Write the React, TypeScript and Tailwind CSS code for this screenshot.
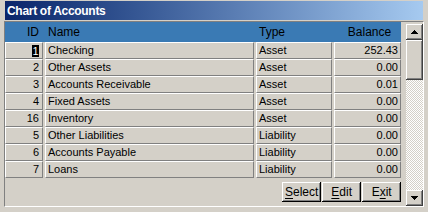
import React from 'react';

type Account = { id: string; name: string; type: string; balance: string };

const accounts: Account[] = [
  { id: '1', name: 'Checking', type: 'Asset', balance: '252.43' },
  { id: '2', name: 'Other Assets', type: 'Asset', balance: '0.00' },
  { id: '3', name: 'Accounts Receivable', type: 'Asset', balance: '0.01' },
  { id: '4', name: 'Fixed Assets', type: 'Asset', balance: '0.00' },
  { id: '16', name: 'Inventory', type: 'Asset', balance: '0.00' },
  { id: '5', name: 'Other Liabilities', type: 'Liability', balance: '0.00' },
  { id: '6', name: 'Accounts Payable', type: 'Liability', balance: '0.00' },
  { id: '7', name: 'Loans', type: 'Liability', balance: '0.00' },
];

const cell =
  'h-[17px] border-t border-l border-t-white border-l-white border-b border-r border-b-[#808080] border-r-[#808080] flex items-center';

const raised =
  'bg-[#d4d0c8] shadow-[inset_-1px_-1px_#404040,inset_1px_1px_#ffffff,inset_-2px_-2px_#808080]';

function Arrow({ down = false }: { down?: boolean }) {
  return (
    <svg width="7" height="4" viewBox="0 0 7 4" shapeRendering="crispEdges" className={down ? 'rotate-180' : ''}>
      <rect x="3" y="0" width="1" height="1" fill="#000" />
      <rect x="2" y="1" width="3" height="1" fill="#000" />
      <rect x="1" y="2" width="5" height="1" fill="#000" />
      <rect x="0" y="3" width="7" height="1" fill="#000" />
    </svg>
  );
}

function Button({ label, hot }: { label: string; hot: number }) {
  return (
    <button className="h-[20px] w-[39px] flex items-center justify-center text-[12px] text-black bg-[#d4d0c8] shadow-[inset_-1px_-1px_#000000,inset_1px_1px_#ffffff,inset_-2px_-2px_#808080]">
      {label.slice(0, hot)}
      <span className="underline underline-offset-2">{label[hot]}</span>
      {label.slice(hot + 1)}
    </button>
  );
}

export default function App() {
  return (
    <div
      className="w-[428px] h-[212px] bg-[#d4d0c8] px-[4px] pt-[1px] flex flex-col overflow-hidden text-black"
      style={{ fontFamily: '"Liberation Sans", Arial, sans-serif' }}
    >
      {/* Title bar */}
      <div className="h-[19px] mx-[1px] bg-gradient-to-r from-[#0a246a] to-[#a6caf0] flex items-center pl-[2px]">
        <span className="text-white font-bold text-[12px] tracking-[-0.3px]">Chart of Accounts</span>
      </div>

      {/* Grid panel */}
      <div className="mt-[1px] flex border-t border-l border-t-[#808080] border-l-[#808080] border-b border-r border-b-white border-r-white h-[186px]">
        <div className="w-[401px] flex flex-col text-[11px]">
          <div className="h-[20px] bg-[#3a7ab4] flex items-center text-[12px]">
            <div className="w-[38px] text-right pr-[4px]">ID</div>
            <div className="w-[211px] pl-[5px]">Name</div>
            <div className="w-[78px] pl-[5px]">Type</div>
            <div className="flex-1 text-right pr-[10px]">Balance</div>
          </div>

          {accounts.map((a, i) => (
            <div key={a.id} className="flex">
              <div className={`${cell} w-[38px] justify-end pr-[3px]`}>
                {i === 0 ? <span className="bg-black text-white leading-[12px] px-[0.5px]">{a.id}</span> : a.id}
              </div>
              <div className={`${cell} w-[209px] ml-[2px] pl-[2px]`}>{a.name}</div>
              <div className={`${cell} w-[76px] ml-[2px] pl-[2px]`}>{a.type}</div>
              <div className={`${cell} w-[67px] ml-[2px] justify-end pr-[2px]`}>{a.balance}</div>
            </div>
          ))}

          <div className="mt-[4px] flex justify-end gap-[1px]">
            <Button label="Select" hot={0} />
            <Button label="Edit" hot={0} />
            <Button label="Exit" hot={1} />
          </div>
        </div>

        {/* Scrollbar */}
        <div className="ml-[5px] w-[17px] pt-[2px] flex flex-col">
          <div className={`${raised} h-[16px] flex items-center justify-center`}>
            <Arrow />
          </div>
          <div className="flex-1 flex flex-col bg-[repeating-conic-gradient(#ffffff_0_25%,#d4d0c8_0_50%)] bg-size-[2px_2px]">
            <div className={`${raised} h-[40px]`} />
          </div>
          <div className={`${raised} h-[16px] flex items-center justify-center`}>
            <Arrow down />
          </div>
        </div>
      </div>
    </div>
  );
}
